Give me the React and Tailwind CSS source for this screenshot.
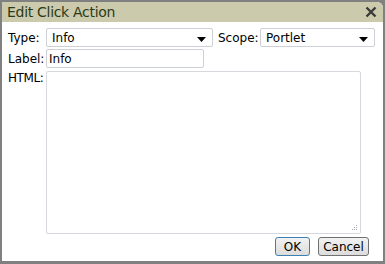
import React from 'react';

const font = { fontFamily: '"DejaVu Sans", Tahoma, sans-serif' };

const Select = ({ value, className }) => (
  <div className={`h-[19px] border border-[#cdd0d6] rounded-[2px] bg-white flex items-center pl-[5px] pr-[6px] ${className}`}>
    <span className="flex-1 leading-none">{value}</span>
    <svg width="9" height="5" viewBox="0 0 9 5" className="mt-[3px]">
      <path d="M0 0H9L4.5 5Z" fill="#000" />
    </svg>
  </div>
);

const App = () => {
  return (
    <div
      className="w-[385px] h-[264px] bg-[#808080] pt-[2px] pl-[2px] pr-[2px] pb-[3px] text-[12px] text-black"
      style={font}
    >
      <div className="h-full flex flex-col bg-white rounded-tr-[6px] overflow-hidden">
        <div className="h-[20px] bg-[#cbcaad] flex items-center justify-between pl-[5px] pr-[6px]">
          <span className="text-[14px] text-[#2a3a16] leading-none tracking-[-0.3px]">Edit Click Action</span>
          <svg width="12" height="12" viewBox="0 0 12 12">
            <path d="M1.5 1.5L10.5 10.5M10.5 1.5L1.5 10.5" stroke="#3a3a3a" strokeWidth="2.4" />
          </svg>
        </div>
        <div className="flex-1 flex flex-col pl-[6px] pt-[6px]">
          <div className="flex items-center">
            <span className="w-[38px]">Type:</span>
            <Select value="Info" className="w-[167px]" />
            <span className="ml-[5px] w-[42px]">Scope:</span>
            <Select value="Portlet" className="w-[115px]" />
          </div>
          <div className="flex items-center mt-[2px]">
            <span className="w-[38px]">Label:</span>
            <div className="h-[19px] w-[158px] border border-[#cdd0d6] rounded-[2px] flex items-center pl-[2px]">
              Info
            </div>
          </div>
          <div className="flex mt-[3px]">
            <span className="w-[38px] leading-[14px] tracking-[-0.4px]">HTML:</span>
            <div className="relative w-[315px] h-[163px] border border-[#d6d8dd] rounded-[2px]">
              <svg width="7" height="7" viewBox="0 0 7 7" className="absolute right-[2px] bottom-[2px]">
                <rect x="5" y="1" width="1" height="1" fill="#aaa" />
                <rect x="3" y="3" width="1" height="1" fill="#aaa" />
                <rect x="5" y="3" width="1" height="1" fill="#aaa" />
                <rect x="1" y="5" width="1" height="1" fill="#aaa" />
                <rect x="3" y="5" width="1" height="1" fill="#aaa" />
                <rect x="5" y="5" width="1" height="1" fill="#aaa" />
              </svg>
            </div>
          </div>
          <div className="flex justify-end gap-[8px] mt-[3px] pr-[14px]">
            <button className="h-[19px] w-[35px] border border-[#3c7fb1] rounded-[3px] bg-gradient-to-b from-[#f2f2f2] to-[#dcdcdc] leading-none">
              OK
            </button>
            <button className="h-[19px] w-[51px] border border-[#707070] rounded-[3px] bg-gradient-to-b from-[#f2f2f2] to-[#dcdcdc] leading-none">
              Cancel
            </button>
          </div>
        </div>
      </div>
    </div>
  );
};

export default App;
